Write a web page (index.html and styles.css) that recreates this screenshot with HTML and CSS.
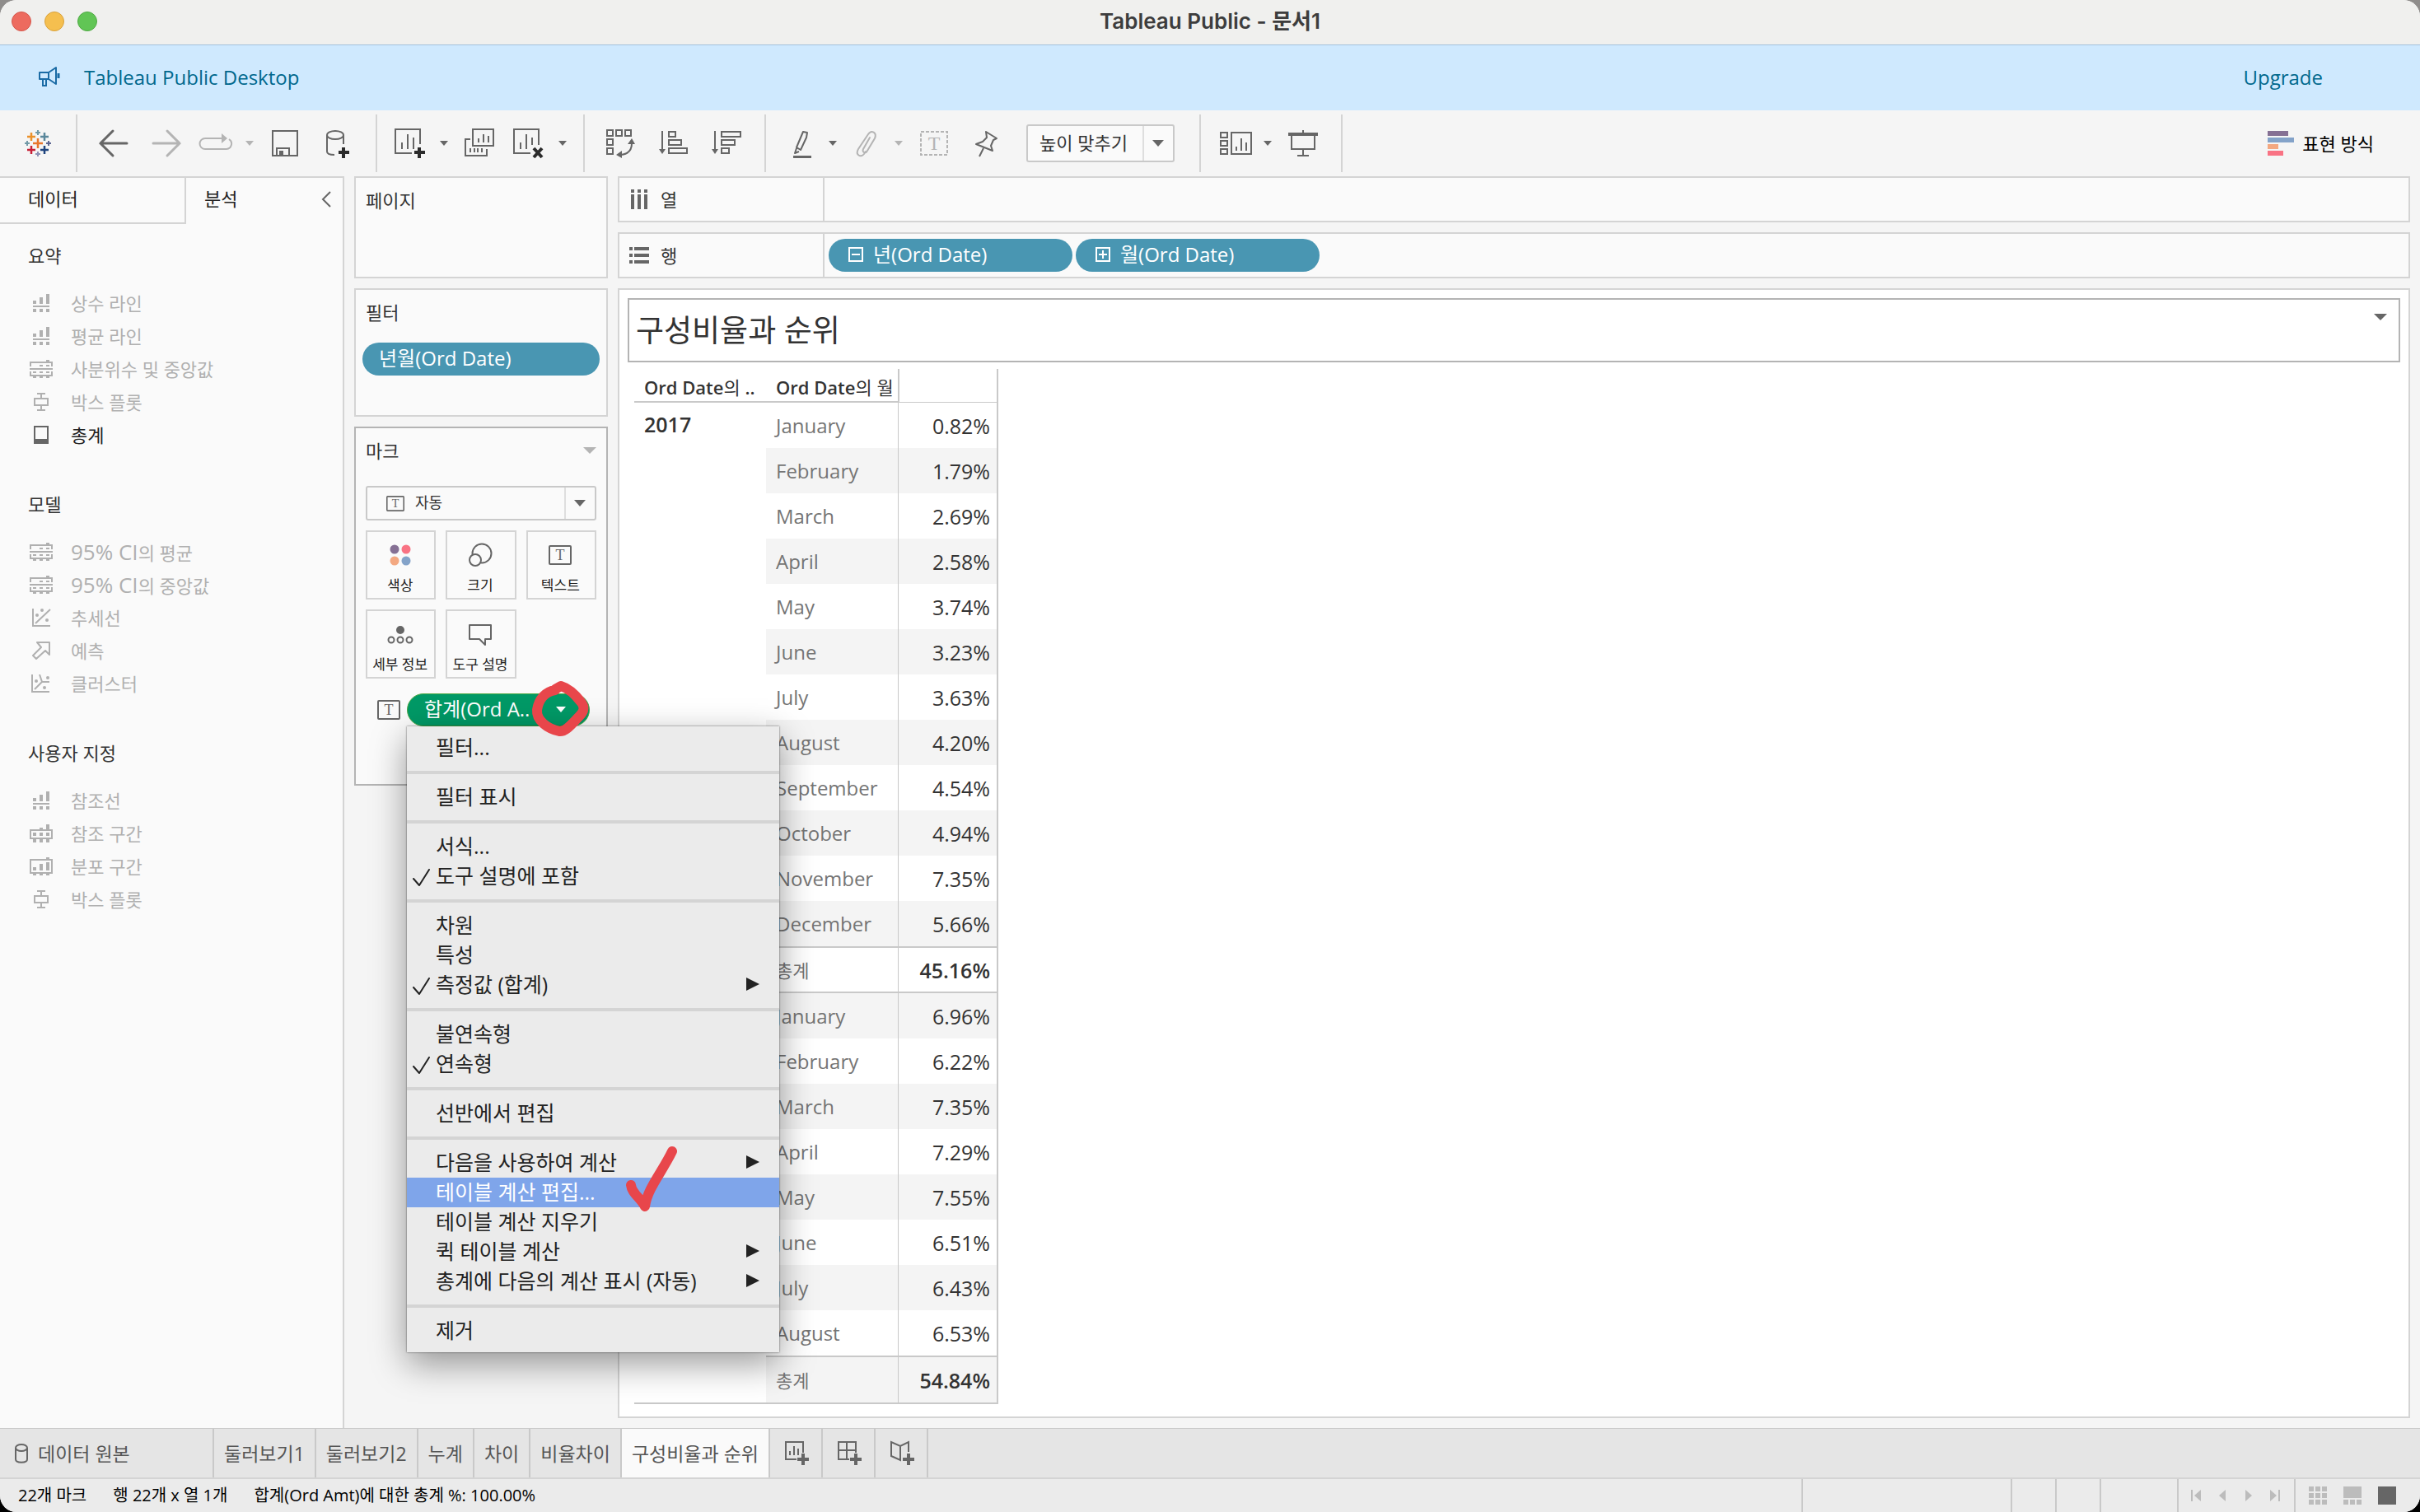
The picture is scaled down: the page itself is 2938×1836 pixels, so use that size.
FILE: index.html
```html
<!DOCTYPE html>
<html lang="ko">
<head>
    <meta charset="UTF-8">
    <meta name="viewport" content="width=device-width, initial-scale=1.0">
    <title>Tableau Public - 문서1</title>
    <link rel="stylesheet" href="styles.css">
</head>
<body>
    <!-- shared icons -->
    <svg class="sprite" aria-hidden="true">
        <symbol id="i-line" viewBox="0 0 28 22">
            <path fill="currentColor" d="M4 8h4v4H4zM12 4h4v8h-4zM20 0h4v12h-4zM4 14h20v2H4zM4 18h4v4H4zM12 18h4v4h-4zM20 18h4v4h-4z"/>
        </symbol>
        <symbol id="i-quartile" viewBox="0 0 28 22">
            <path fill="none" stroke="currentColor" stroke-width="2" d="M1 8V3H27V8M1 14V19H27V14"/>
            <path fill="currentColor" d="M20 0h4v2h-4zM12 6h4v2h-4zM20 6h4v2h-4zM0 10h28v2H0zM4 14h4v2H4zM12 14h4v2h-4zM20 14h4v2h-4zM4 20h4v2H4zM12 20h4v2h-4zM20 20h4v2h-4z"/>
        </symbol>
        <symbol id="i-box" viewBox="0 0 28 22">
            <path fill="none" stroke="currentColor" stroke-width="2" d="M9 1H19M14 1V7M6 7H22V15H6ZM14 15V21M9 21H19"/>
        </symbol>
        <symbol id="i-total" viewBox="0 0 28 22">
            <path fill="none" stroke="currentColor" stroke-width="2" d="M6 1H22V21H6Z"/>
            <path fill="currentColor" d="M6 16h16v5H6z"/>
        </symbol>
        <symbol id="i-trend" viewBox="0 0 28 22">
            <path fill="none" stroke="currentColor" stroke-width="2" d="M4 0V21H25M7 18L25 1"/>
            <g fill="currentColor"><circle cx="9" cy="8" r="2"/><circle cx="15" cy="2" r="2"/><circle cx="21" cy="14" r="2"/></g>
        </symbol>
        <symbol id="i-forecast" viewBox="0 0 28 22">
            <path fill="none" stroke="currentColor" stroke-width="2" stroke-linejoin="round" d="M9 1H24V16L19 11L8 21L4 17L14 7Z"/>
        </symbol>
        <symbol id="i-cluster" viewBox="0 0 28 22">
            <path fill="none" stroke="currentColor" stroke-width="2" d="M3 0V21H24M6 18L15 9L12 0M15 9H24"/>
            <g fill="currentColor"><circle cx="8" cy="8" r="2"/><circle cx="22" cy="4" r="2"/><circle cx="18" cy="16" r="2"/></g>
        </symbol>
        <symbol id="i-band" viewBox="0 0 28 22">
            <path fill="none" stroke="currentColor" stroke-width="2" d="M1 7H27V17H1Z"/>
            <path fill="currentColor" d="M20 0h4v6h-4zM12 4h4v2h-4zM4 10h4v4H4zM12 10h4v4h-4zM20 10h4v4h-4zM4 18h4v4H4zM12 18h4v4h-4zM20 18h4v4h-4z"/>
        </symbol>
        <symbol id="i-dist" viewBox="0 0 28 22">
            <path fill="none" stroke="currentColor" stroke-width="2" d="M1 3H27V19H1Z"/>
            <path fill="currentColor" d="M20 0h4v2h-4zM4 12h4v4H4zM12 8h4v8h-4zM20 6h4v10h-4zM4 20h4v2H4zM12 20h4v2h-4zM20 20h4v2h-4z"/>
        </symbol>
        <symbol id="i-text" viewBox="0 0 28 24">
            <rect x="1" y="1" width="26" height="22" rx="1" fill="none" stroke="currentColor" stroke-width="2"/>
            <text x="14" y="18" text-anchor="middle" font-family="Liberation Serif, serif" font-size="18" fill="currentColor">T</text>
        </symbol>
        <symbol id="i-check" viewBox="0 0 22 22">
            <path fill="none" stroke="currentColor" stroke-width="2" stroke-linecap="round" stroke-linejoin="round" d="M1 12L8 20L20 1"/>
        </symbol>
    </svg>

    <div class="window">
        <header class="titlebar">
            <button class="light red" aria-label="닫기"></button>
            <button class="light yellow" aria-label="최소화"></button>
            <button class="light green" aria-label="확대"></button>
            <h1>Tableau Public - 문서1</h1>
        </header>

        <div class="banner">
            <svg width="26" height="26" viewBox="0 0 26 26" fill="none" stroke="currentColor" stroke-width="2" stroke-linejoin="round"><path d="M1 7H12L21 1V21L12 15H1ZM12 7V15M5 15V24M9 15V24M5 23H9"/><path d="M24 8V14" stroke-width="3"/></svg>
            <a href="#">Tableau Public Desktop</a>
            <a class="upgrade" href="#">Upgrade</a>
        </div>

        <nav class="toolbar">
            <div class="group first">
                <button class="tool" aria-label="시작 페이지">
                    <svg class="icon" viewBox="0 0 36 36" fill="none" stroke-width="2">
                        <path stroke="#e8762c" stroke-width="2.5" d="M18 12V24M12 18H24"/>
                        <path stroke="#eb912b" stroke-width="2.5" d="M10 5V15M5 10H15"/>
                        <path stroke="#59879b" stroke-width="2.5" d="M26 5V15M21 10H31"/>
                        <path stroke="#c72037" stroke-width="2.5" d="M10 21V31M5 26H15"/>
                        <path stroke="#1f447e" stroke-width="2.5" d="M26 21V31M21 26H31"/>
                        <path stroke="#7199a6" d="M18 2V8M15 5H21M5 15V21M2 18H8"/>
                        <path stroke="#8d91b5" d="M18 28V34M15 31H21"/>
                        <path stroke="#5c6692" d="M31 15V21M28 18H34"/>
                    </svg>
                </button>
            </div>
            <div class="group">
                <button class="tool" aria-label="뒤로"><svg class="icon" viewBox="0 0 36 36"><path stroke-width="3" stroke-linecap="round" d="M17 3L2 18L17 33M2 18H34"/></svg></button>
                <button class="tool off" aria-label="앞으로"><svg class="icon" viewBox="0 0 36 36"><path stroke-width="3" stroke-linecap="round" d="M19 3L34 18L19 33M34 18H2"/></svg></button>
                <button class="tool split off" aria-label="다시 실행"><svg class="icon" viewBox="0 0 36 36"><path d="M25 12H5a6.500 6.500 0 0 0 0 13H31a6.500 6.500 0 0 0 3-12"/><path class="solid" d="M25 6L32 12L25 18Z"/></svg><i class="caret"></i></button>
                <button class="tool" aria-label="저장"><svg class="icon" viewBox="0 0 36 36"><path d="M3 3H33V33H3ZM8 33V24H23V33"/><path class="solid" d="M11 27h5v5h-5z"/></svg></button>
                <button class="tool" aria-label="새 데이터 원본"><svg class="icon" viewBox="0 0 36 36"><ellipse cx="15" cy="8" rx="10" ry="5"/><path d="M5 8V28C5 31 9 32 14 32M25 8V19"/><path class="mark" d="M25 23V36M19 29H32"/></svg></button>
            </div>
            <div class="group">
                <button class="tool split" aria-label="새 워크시트"><svg class="icon" viewBox="0 0 36 36"><path d="M20 30H0V1H30V19M8 25V17M15 25V7M22 25V11"/><path class="mark" d="M29 23V36M23 29H36"/></svg><i class="caret"></i></button>
                <button class="tool" aria-label="복제"><svg class="icon" viewBox="0 0 36 36"><path d="M10 1H35V21H10ZM7 13H1V33H27V25M17 17V12M23 17V7M29 17V9M7 29V24M12 29V24M16 29V24M21 29V24"/></svg></button>
                <button class="tool split" aria-label="지우기"><svg class="icon" viewBox="0 0 36 36"><path d="M20 30H0V1H30V20M8 25V17M15 25V7M22 20V11"/><path class="mark" d="M24 24L34 35M34 24L24 35"/></svg><i class="caret"></i></button>
            </div>
            <div class="group">
                <button class="tool" aria-label="행과 열 바꾸기"><svg class="icon" viewBox="0 0 36 36"><path d="M1 2h7v7H1zM12 2h7v7h-7zM23 2h7v7h-7zM1 13h7v7H1zM1 24h7v7H1zM31 18C31 26 27 31 18 32"/><path class="solid" d="M26 19L31 12L35 19ZM12 32L19 27V36Z"/></svg></button>
                <button class="tool" aria-label="오름차순 정렬"><svg class="icon" viewBox="0 0 36 36"><path d="M4 3V27M12 4h8v6h-8zM12 14h15v6H12zM12 24h22v6H12z"/><path class="solid" d="M0 25H8L4 31Z"/></svg></button>
                <button class="tool" aria-label="내림차순 정렬"><svg class="icon" viewBox="0 0 36 36"><path d="M4 3V27M12 4h23v6H12zM12 14h16v6H12zM12 24h9v6h-9z"/><path class="solid" d="M0 25H8L4 31Z"/></svg></button>
            </div>
            <div class="group">
                <button class="tool split" aria-label="하이라이트"><svg class="icon" viewBox="0 0 36 36"><path stroke-linejoin="round" d="M23 4L28 5L27 11L20 26L15 23Z M15 24L13 30L18 28"/><path class="solid" d="M11 33h22v3H11z"/></svg><i class="caret"></i></button>
                <button class="tool split off" aria-label="그룹"><svg class="icon" viewBox="0 0 36 36"><path stroke-linecap="round" d="M24 11L16 25C14 29 19 31 21 27L30 12C33 5 26 1 22 7L10 25C6 32 13 36 17 31L19 28"/></svg><i class="caret"></i></button>
                <button class="tool off" aria-label="레이블"><svg class="icon" viewBox="0 0 36 36"><rect x="2" y="4" width="32" height="28" stroke-dasharray="4 2"/><text x="18" y="26" text-anchor="middle">T</text></svg></button>
                <button class="tool" aria-label="고정"><svg class="icon" viewBox="0 0 36 36"><path stroke-linejoin="round" d="M17 4L30 12L26 14L23 21L25 27L5 19L13 16L18 11ZM14 24L9 34"/></svg></button>
                <div class="dropdown fit">
                    <select aria-label="맞춤"><option>높이 맞추기</option></select>
                    <i class="caret"></i>
                </div>
            </div>
            <div class="group">
                <button class="tool split" aria-label="카드 표시"><svg class="icon" viewBox="0 0 36 36"><path d="M2 5h8v6H2zM2 15h8v6H2zM2 25h8v6H2zM15 5H39V31H15ZM21 27V22M27 27V12M33 27V17"/></svg><i class="caret"></i></button>
                <button class="tool" aria-label="프레젠테이션 모드"><svg class="icon" viewBox="0 0 36 36"><path d="M4 9V25H32V9M18 25V33M11 33H25M18 2V6"/><path class="solid" d="M0 5h36v4H0z"/></svg></button>
            </div>
            <button class="show-me">
                <svg width="32" height="30" viewBox="0 0 32 30"><path fill="#857094" d="M0 0h25v6H0z"/><path fill="#84a3c9" d="M0 8h32v6H0z"/><path fill="#f3a881" d="M0 16h13v6H0z"/><path fill="#f97384" d="M0 24h19v6H0z"/></svg>
                표현 방식
            </button>
        </nav>

        <main class="workspace">
            <aside class="sidebar">
                <div class="side-tabs">
                    <button class="side-tab">데이터</button>
                    <button class="side-tab active">분석</button>
                    <button class="collapse" aria-label="접기"><svg width="12" height="20" viewBox="0 0 12 20"><path fill="none" stroke="#666" stroke-width="2" d="M11 1L2 10L11 19"/></svg></button>
                </div>
                <section class="pane">
                    <h2>요약</h2>
                    <ul>
                        <li><svg><use href="#i-line"/></svg>상수 라인</li>
                        <li><svg><use href="#i-line"/></svg>평균 라인</li>
                        <li><svg><use href="#i-quartile"/></svg>사분위수 및 중앙값</li>
                        <li><svg><use href="#i-box"/></svg>박스 플롯</li>
                        <li class="on"><svg><use href="#i-total"/></svg>총계</li>
                    </ul>
                </section>
                <section class="pane">
                    <h2>모델</h2>
                    <ul>
                        <li><svg><use href="#i-quartile"/></svg><span><span class="latin">95% CI</span>의 평균</span></li>
                        <li><svg><use href="#i-quartile"/></svg><span><span class="latin">95% CI</span>의 중앙값</span></li>
                        <li><svg><use href="#i-trend"/></svg>추세선</li>
                        <li><svg><use href="#i-forecast"/></svg>예측</li>
                        <li><svg><use href="#i-cluster"/></svg>클러스터</li>
                    </ul>
                </section>
                <section class="pane">
                    <h2>사용자 지정</h2>
                    <ul>
                        <li><svg><use href="#i-line"/></svg>참조선</li>
                        <li><svg><use href="#i-band"/></svg>참조 구간</li>
                        <li><svg><use href="#i-dist"/></svg>분포 구간</li>
                        <li><svg><use href="#i-box"/></svg>박스 플롯</li>
                    </ul>
                </section>
            </aside>

            <div class="cards">
                <section class="card pages"><h2>페이지</h2></section>
                <section class="card filters">
                    <h2>필터</h2>
                    <button class="pill">년월(Ord Date)</button>
                </section>
                <section class="card marks">
                    <h2>마크 <i class="caret big"></i></h2>
                    <div class="dropdown mark-type">
                        <svg width="22" height="19" viewBox="0 0 28 24"><use href="#i-text"/></svg>
                        <select aria-label="마크 유형"><option>자동</option></select>
                        <i class="caret"></i>
                    </div>
                    <div class="mark-grid">
                        <button><svg viewBox="0 0 32 32"><circle cx="9" cy="9" r="5.500" fill="#857094"/><circle cx="23" cy="9" r="5.500" fill="#f97384"/><circle cx="9" cy="23" r="5.500" fill="#f3a881"/><circle cx="23" cy="23" r="5.500" fill="#84a3c9"/></svg>색상</button>
                        <button><svg viewBox="0 0 32 32" fill="none" stroke="#666" stroke-width="2"><circle cx="18" cy="14" r="11.500"/><circle cx="10" cy="22" r="7" fill="#fafafa"/></svg>크기</button>
                        <button><svg viewBox="-2 -4 32 32"><use href="#i-text" width="28" height="24"/></svg>텍스트</button>
                        <button><svg viewBox="0 0 32 32" fill="none" stroke="#666" stroke-width="2"><circle cx="16" cy="11" r="4" fill="#666"/><circle cx="5" cy="23" r="3.500"/><circle cx="16" cy="23" r="3.500"/><circle cx="27" cy="23" r="3.500"/></svg>세부 정보</button>
                        <button><svg viewBox="0 0 32 32" fill="none" stroke="#666" stroke-width="2" stroke-linejoin="round"><path d="M3 5H29V22H22V29L15 22H3Z"/></svg>도구 설명</button>
                    </div>
                    <div class="mark-row">
                        <svg width="28" height="24"><use href="#i-text"/></svg>
                        <div class="pill-wrap">
                            <button class="pill green">합계(Ord A..<i class="caret"></i></button>
                            <div class="menu" role="menu">
                                <div class="menu-group"><button>필터...</button></div>
                                <div class="menu-group"><button>필터 표시</button></div>
                                <div class="menu-group">
                                    <button>서식...</button>
                                    <button><svg class="check"><use href="#i-check"/></svg>도구 설명에 포함</button>
                                </div>
                                <div class="menu-group">
                                    <button>차원</button>
                                    <button>특성</button>
                                    <button class="sub"><svg class="check"><use href="#i-check"/></svg>측정값 (합계)</button>
                                </div>
                                <div class="menu-group">
                                    <button>불연속형</button>
                                    <button><svg class="check"><use href="#i-check"/></svg>연속형</button>
                                </div>
                                <div class="menu-group"><button>선반에서 편집</button></div>
                                <div class="menu-group">
                                    <button class="sub">다음을 사용하여 계산</button>
                                    <button class="selected">테이블 계산 편집...</button>
                                    <button>테이블 계산 지우기</button>
                                    <button class="sub">퀵 테이블 계산</button>
                                    <button class="sub">총계에 다음의 계산 표시 (자동)</button>
                                </div>
                                <div class="menu-group"><button>제거</button></div>
                            </div>
                            <!-- red pen marks -->
                            <svg class="pen ring" viewBox="0 0 72 72"><path d="M29 13C17 15 9 24 7 37C6 50 20 60 34 63C42 64 50 53 58 45C65 38 65 33 60 27C53 18 46 11 36 8L29 12"/></svg>
                            <svg class="pen tick" viewBox="0 0 68 82"><path d="M8 48C9 58 20 64 25 74C28 52 46 32 58 7"/></svg>
                        </div>
                    </div>
                </section>
            </div>

            <div class="sheet">
                <div class="shelf">
                    <div class="shelf-label">
                        <svg width="24" height="24" viewBox="0 0 24 24" fill="#666"><path d="M2 0h4v4H2zM10 0h4v4h-4zM18 0h4v4h-4zM2 6h4v18H2zM10 6h4v18h-4zM18 6h4v18h-4z"/></svg>열
                    </div>
                </div>
                <div class="shelf">
                    <div class="shelf-label">
                        <svg width="24" height="24" viewBox="0 0 24 24" fill="#666"><path d="M0 2h4v4H0zM0 10h4v4H0zM0 18h4v4H0zM6 2h18v4H6zM6 10h18v4H6zM6 18h18v4H6z"/></svg>행
                    </div>
                    <div class="shelf-pills">
                        <button class="pill"><svg width="18" height="18" viewBox="0 0 18 18"><path d="M1 1H17V17H1ZM4 9H14"/></svg>년(Ord Date)</button>
                        <button class="pill"><svg width="18" height="18" viewBox="0 0 18 18"><path d="M1 1H17V17H1ZM4 9H14M9 4V14"/></svg>월(Ord Date)</button>
                    </div>
                </div>
                <div class="view">
                    <div class="view-title">
                        <h2>구성비율과 순위</h2>
                        <i class="caret big"></i>
                    </div>
                    <table>
                        <thead>
                            <tr><th>Ord Date<span>의</span> ..</th><th>Ord Date<span>의 월</span></th><th></th></tr>
                        </thead>
                        <tbody>
                            <tr><th class="year" rowspan="13">2017</th><td>January</td><td>0.82%</td></tr>
                            <tr><td>February</td><td>1.79%</td></tr>
                            <tr><td>March</td><td>2.69%</td></tr>
                            <tr><td>April</td><td>2.58%</td></tr>
                            <tr><td>May</td><td>3.74%</td></tr>
                            <tr><td>June</td><td>3.23%</td></tr>
                            <tr><td>July</td><td>3.63%</td></tr>
                            <tr><td>August</td><td>4.20%</td></tr>
                            <tr><td>September</td><td>4.54%</td></tr>
                            <tr><td>October</td><td>4.94%</td></tr>
                            <tr><td>November</td><td>7.35%</td></tr>
                            <tr><td>December</td><td>5.66%</td></tr>
                            <tr class="total"><td>총계</td><td>45.16%</td></tr>
                            <tr><th class="year" rowspan="9"></th><td>January</td><td>6.96%</td></tr>
                            <tr><td>February</td><td>6.22%</td></tr>
                            <tr><td>March</td><td>7.35%</td></tr>
                            <tr><td>April</td><td>7.29%</td></tr>
                            <tr><td>May</td><td>7.55%</td></tr>
                            <tr><td>June</td><td>6.51%</td></tr>
                            <tr><td>July</td><td>6.43%</td></tr>
                            <tr><td>August</td><td>6.53%</td></tr>
                            <tr class="total"><td>총계</td><td>54.84%</td></tr>
                        </tbody>
                    </table>
                </div>
            </div>
        </main>

        <nav class="sheet-tabs">
            <button class="source"><svg width="16" height="24" viewBox="0 0 16 24"><ellipse cx="8" cy="5" rx="7" ry="4"/><path d="M1 5V19C1 24 15 24 15 19V5"/></svg>데이터 원본</button>
            <button>둘러보기1</button>
            <button>둘러보기2</button>
            <button>누계</button>
            <button>차이</button>
            <button>비율차이</button>
            <button class="active">구성비율과 순위</button>
            <button class="new" aria-label="새 워크시트"><svg width="30" height="30" viewBox="0 0 30 30"><path d="M14 22H1V1H22V14M6 17V12M11 17V6M16 17V9"/><path stroke-width="4" d="M22 15V29M15 22H29"/></svg></button>
            <button class="new" aria-label="새 대시보드"><svg width="30" height="30" viewBox="0 0 30 30"><path d="M14 22H1V1H22V14M1 11H22M11 1V22"/><path stroke-width="4" d="M22 15V29M15 22H29"/></svg></button>
            <button class="new" aria-label="새 스토리"><svg width="30" height="30" viewBox="0 0 30 30"><path d="M22 13V1L12 6L1 1V18L12 23V6"/><path stroke-width="4" d="M22 15V29M15 22H29"/></svg></button>
        </nav>

        <footer class="status">
            <span>22개 마크</span>
            <span>행 22개 x 열 1개</span>
            <span class="grow">합계(Ord Amt)에 대한 총계 %: 100.00%</span>
            <div class="cell wide"></div>
            <div class="cell"></div>
            <div class="cell"></div>
            <div class="cell medium"></div>
            <div class="cell nav">
                <button aria-label="처음"><svg width="12" height="14" viewBox="0 0 12 14"><path d="M0 0h2v14H0zM12 0V14L4 7z"/></svg></button>
                <button aria-label="이전"><svg width="12" height="14" viewBox="0 0 12 14"><path d="M10 0V14L2 7z"/></svg></button>
                <button aria-label="다음"><svg width="12" height="14" viewBox="0 0 12 14"><path d="M2 0V14L10 7z"/></svg></button>
                <button aria-label="마지막"><svg width="12" height="14" viewBox="0 0 12 14"><path d="M10 0h2v14h-2zM0 0V14L8 7z"/></svg></button>
            </div>
            <div class="cell modes">
                <button aria-label="시트 정렬"><svg width="22" height="22" viewBox="0 0 22 22"><path d="M0 0h6v6H0zM8 0h6v6H8zM16 0h6v6h-6zM0 8h6v6H0zM8 8h6v6H8zM16 8h6v6h-6zM0 16h6v6H0zM8 16h6v6H8zM16 16h6v6h-6z"/></svg></button>
                <button aria-label="필름 스트립"><svg width="22" height="22" viewBox="0 0 22 22"><path d="M0 0h22v14H0zM0 16h6v6H0zM8 16h6v6H8zM16 16h6v6h-6z"/></svg></button>
                <button class="on" aria-label="탭"><svg width="22" height="22" viewBox="0 0 22 22"><path d="M0 0h22v22H0z"/></svg></button>
            </div>
        </footer>
    </div>
</body>
</html>
```
FILE: styles.css
```css
* {
    box-sizing: border-box;
}
body {
    margin: 0;
    background: linear-gradient(#8f8d8b 50%, #000 50%);
    font-family: "Open Sans", "Noto Sans CJK KR", sans-serif;
    font-size: 22px;
    line-height: 32px;
    color: #333;
}
h1, h2, ul {
    margin: 0;
    padding: 0;
    font-size: 22px;
    font-weight: normal;
    list-style: none;
}
button {
    margin: 0;
    padding: 0;
    border: none;
    background: none;
    font: inherit;
    color: inherit;
    text-align: left;
    white-space: nowrap;
}
svg {
    display: block;
    flex: none;
    overflow: visible;
}
.sprite {
    position: absolute;
    width: 0;
    height: 0;
}
.window {
    display: flex;
    flex-direction: column;
    min-height: 100vh;
    border-radius: 20px;
    overflow: hidden;
    background: #f5f5f5;
}
.caret {
    flex: none;
    border: 5px solid transparent;
    border-top: 6px solid #666;
    border-bottom: none;
}
.caret.big {
    border-width: 8px 8px 0;
}

/* title bar and banner */
.titlebar {
    position: relative;
    display: flex;
    align-items: center;
    gap: 16px;
    height: 54px;
    padding: 0 14px 2px;
    background: #f0f0ee;
}
.titlebar h1 {
    position: absolute;
    left: 0;
    right: 0;
    text-align: center;
    font-family: Inter, "Noto Sans CJK KR", sans-serif;
    font-size: 26px;
    font-weight: 600;
    color: #3d3d3d;
    pointer-events: none;
}
.light {
    width: 24px;
    height: 24px;
    border-radius: 50%;
}
.red { background: #ed6b5f; border: 1px solid #d5574c; }
.yellow { background: #f5bf4f; border: 1px solid #d8a13b; }
.green { background: #61c555; border: 1px solid #50a945; }
.banner {
    display: flex;
    align-items: center;
    height: 80px;
    padding: 0 118px 2px 47px;
    border-top: 1px solid #a3c2dc;
    background: #cfe9fe;
    color: #1a6ba5;
    font-size: 24px;
}
.banner a {
    margin-left: 29px;
    color: #00688d;
    text-decoration: none;
}
.banner .upgrade {
    margin-left: auto;
}

/* toolbar */
.toolbar {
    display: flex;
    align-items: center;
    height: 80px;
}
.group {
    display: flex;
    align-items: center;
    height: 70px;
    padding: 0 14px 0 12px;
    border-right: 2px solid #d4d4d4;
}
.group.first {
    padding: 0 14px;
}
.tool {
    display: flex;
    align-items: center;
    justify-content: center;
    width: 64px;
    height: 64px;
}
.tool.split {
    justify-content: flex-start;
    width: 80px;
    padding-left: 10px;
    gap: 18px;
}
.icon {
    width: 36px;
    height: 36px;
    fill: none;
    stroke: #666;
    stroke-width: 2;
}
.icon .solid {
    fill: #666;
    stroke: none;
}
.icon .mark {
    stroke: #2b2b2b;
    stroke-width: 4;
}
.icon text {
    font-family: "Liberation Serif", serif;
    font-size: 24px;
    fill: #b4b4b4;
    stroke: none;
}
.off .icon {
    stroke: #b4b4b4;
}
.off .solid {
    fill: #b4b4b4;
}
.off .caret {
    border-top-color: #b4b4b4;
}
.dropdown {
    position: relative;
    display: flex;
    align-items: center;
    border: 2px solid #c9c9c9;
    border-radius: 3px;
    background: #fafafa;
}
.dropdown select {
    width: 100%;
    height: 100%;
    padding: 0 0 2px 14px;
    border: none;
    appearance: none;
    background: linear-gradient(#dedede, #dedede) right 35px top / 2px 100% no-repeat;
    font: inherit;
    color: #333;
}
.dropdown .caret {
    position: absolute;
    right: 11px;
    border-width: 8px 7px 0;
}
.fit {
    width: 180px;
    height: 46px;
    margin: 0 16px;
}
.show-me {
    display: flex;
    align-items: center;
    gap: 10px;
    margin: 0 56px 0 auto;
    color: #000;
}

/* workspace */
.workspace {
    flex: 1;
    display: flex;
    gap: 12px;
    padding-right: 12px;
}
.sidebar {
    flex: none;
    width: 418px;
    border: 2px solid #d4d4d4;
    border-width: 2px 2px 0 0;
    background: #fafafa;
}
.side-tabs {
    display: flex;
    height: 56px;
    margin-bottom: 18px;
    color: #222;
}
.side-tab {
    width: 226px;
    padding: 0 0 4px 34px;
    border: 2px solid #d4d4d4;
    border-width: 0 2px 2px 0;
}
.side-tab.active {
    width: auto;
    padding-left: 22px;
    border-color: transparent;
}
.collapse {
    margin: 0 14px 4px auto;
}
.pane {
    padding-left: 34px;
    margin-bottom: 44px;
}
.pane h2 {
    margin-bottom: 18px;
    line-height: 40px;
}
.pane li {
    display: flex;
    align-items: center;
    gap: 22px;
    height: 40px;
    padding-left: 2px;
    color: #b0b0b0;
}
.pane li svg {
    width: 28px;
    height: 22px;
}
.pane .on {
    color: #222;
}
.pane .on svg {
    color: #666;
}
.latin {
    font-size: 26px;
}

/* cards */
.cards {
    flex: none;
    display: flex;
    flex-direction: column;
    gap: 12px;
    width: 308px;
}
.card {
    padding: 7px 8px;
    border: 2px solid #d4d4d4;
    background: #fafafa;
}
.card h2 {
    display: flex;
    align-items: center;
    justify-content: space-between;
    height: 40px;
    padding: 0 4px;
}
.pages {
    height: 124px;
}
.filters {
    height: 156px;
}
.filters .pill {
    width: 100%;
    margin-top: 17px;
}
.pill {
    display: flex;
    align-items: center;
    gap: 12px;
    height: 40px;
    padding: 0 24px 2px 20px;
    border-radius: 20px;
    background: #4996b2;
    color: #fff;
    font-size: 24px;
}
.pill svg {
    fill: none;
    stroke: #fff;
    stroke-width: 2;
}
.green.pill {
    justify-content: space-between;
    width: 222px;
    padding-right: 28px;
    background: #009966;
}
.pill .caret {
    border-width: 7px 6px 0;
    border-top-color: #fff;
}
.marks {
    height: 436px;
    border-color: #b4b4b4;
}
.marks h2 .caret {
    border-top-color: #b4b4b4;
}
.mark-type {
    height: 42px;
    margin: 23px 4px 12px;
    font-size: 18px;
}
.mark-type select {
    padding-left: 58px;
}
.mark-type svg {
    position: absolute;
    left: 23px;
    color: #666;
}
.mark-grid {
    display: grid;
    grid-template-columns: 1fr 1fr 1fr;
    gap: 12px;
    margin: 0 4px 18px;
}
.mark-grid button {
    display: flex;
    flex-direction: column;
    align-items: center;
    height: 84px;
    padding: 12px 2px 0 0;
    border: 2px solid #d4d4d4;
    font-size: 17px;
    line-height: 24px;
    color: #222;
}
.mark-grid svg {
    width: 32px;
    height: 32px;
    margin-bottom: 9px;
    color: #666;
}
.mark-row {
    display: flex;
    align-items: center;
    gap: 8px;
    padding-left: 18px;
    color: #666;
}
.pill-wrap {
    position: relative;
}

/* context menu */
.menu {
    position: absolute;
    z-index: 2;
    top: 100%;
    left: 0;
    width: 452px;
    background: #ebebeb;
    box-shadow: 0 0 2px rgba(0, 0, 0, 0.6), 0 14px 40px rgba(0, 0, 0, 0.4);
    font-size: 25px;
    color: #222;
}
.menu-group {
    padding: 10px 0;
    border-bottom: 4px solid #d4d4d4;
}
.menu-group:first-child {
    padding-top: 8px;
}
.menu-group:last-child {
    padding-bottom: 8px;
    border-bottom: none;
}
.menu button {
    position: relative;
    display: flex;
    align-items: center;
    width: 100%;
    height: 36px;
    padding: 0 24px 2px 35px;
}
.menu .check {
    position: absolute;
    left: 7px;
    top: 9px;
    width: 22px;
    height: 22px;
}
.menu .sub::after {
    content: "";
    margin-left: auto;
    border: 8px solid transparent;
    border-left: 16px solid #222;
    border-right: none;
}
.menu .selected {
    background: #7fa5ea;
    color: #fff;
}
.pen {
    position: absolute;
    z-index: 3;
    fill: none;
    stroke: #e8464b;
    stroke-width: 12;
    stroke-linecap: round;
    stroke-linejoin: round;
    pointer-events: none;
}
.ring {
    left: 151px;
    top: -17px;
    width: 72px;
    height: 72px;
}
.tick {
    left: 264px;
    top: 549px;
    width: 68px;
    height: 82px;
}

/* shelves and view */
.sheet {
    flex: 1;
    display: flex;
    flex-direction: column;
    gap: 12px;
    padding-bottom: 12px;
}
.shelf {
    display: flex;
    height: 56px;
    border: 2px solid #d4d4d4;
    background: #fafafa;
}
.shelf-label {
    display: flex;
    align-items: center;
    gap: 14px;
    width: 249px;
    padding-left: 12px;
    border-right: 2px solid #d4d4d4;
}
.shelf-pills {
    display: flex;
    align-items: center;
    gap: 4px;
    padding-left: 5px;
}
.shelf-pills .pill {
    width: 296px;
    padding-left: 24px;
}
.view {
    flex: 1;
    padding: 10px;
    border: 2px solid #d4d4d4;
    background: #fff;
}
.view-title {
    display: flex;
    justify-content: space-between;
    height: 78px;
    padding: 0 14px 0 8px;
    border: 2px solid #b4b4b4;
}
.view-title h2 {
    font-size: 37px;
    line-height: 74px;
}
.view-title .caret {
    margin-top: 17px;
}
table {
    width: 442px;
    margin: 8px 0 0 8px;
    table-layout: fixed;
    border-collapse: separate;
    border-spacing: 0;
    border-bottom: 2px solid #c9c9c9;
}
th, td {
    padding: 0 0 0 12px;
    text-align: left;
    white-space: nowrap;
}
th {
    width: 160px;
    font-weight: 600;
}
th span {
    font-weight: normal;
}
thead th {
    height: 41px;
    padding-top: 4px;
    border-bottom: 2px solid #c9c9c9;
}
thead th:last-child {
    width: 122px;
    border: 2px solid #c9c9c9;
    border-width: 0 2px 1px;
}
td {
    height: 55px;
    font-size: 24px;
    color: #757575;
}
td:last-child {
    padding: 0 8px 0 0;
    border: 2px solid #c9c9c9;
    border-width: 0 2px 0 1px;
    text-align: right;
    font-size: 25px;
    color: #333;
}
.year {
    padding-top: 10px;
    border-bottom: 2px solid #c9c9c9;
    vertical-align: top;
    font-size: 25px;
}
tbody tr:nth-child(even) td {
    background: #f4f4f4;
}
.total td {
    height: 57px;
    border-top: 2px solid #c9c9c9;
    border-bottom: 2px solid #c9c9c9;
    font-size: 22px;
}
.total td:last-child {
    border-top-width: 2px;
    border-bottom-width: 2px;
    font-size: 25px;
    font-weight: 600;
}
tbody tr:last-child td, .year[rowspan="9"] {
    border-bottom: none;
}

/* bottom bars */
.sheet-tabs {
    display: flex;
    height: 62px;
    border-top: 1px solid #c9c9c9;
    border-bottom: 2px solid #d4d4d4;
    background: #e5e5e5;
    font-size: 23px;
    color: #555;
}
.sheet-tabs button {
    padding: 0 12px;
    border-right: 2px solid #c9c9c9;
}
.sheet-tabs svg {
    fill: none;
    stroke: #666;
    stroke-width: 2;
}
.sheet-tabs .source {
    display: flex;
    align-items: center;
    gap: 12px;
    width: 260px;
    padding-left: 18px;
}
.sheet-tabs .active {
    background: #fafafa;
}
.sheet-tabs .new {
    width: 64px;
    padding-left: 18px;
}
.status {
    display: flex;
    align-items: center;
    gap: 32px;
    height: 40px;
    padding-left: 22px;
    background: #ebebeb;
    font-size: 20px;
    color: #000;
}
.grow {
    flex: 1;
}
.cell {
    display: flex;
    align-items: center;
    height: 100%;
    width: 54px;
    margin-left: -32px;
    border-left: 2px solid #c9c9c9;
}
.cell svg {
    fill: #bcbcbc;
}
.wide {
    width: 254px;
}
.medium {
    width: 94px;
}
.nav {
    width: 142px;
    padding-left: 15px;
    gap: 20px;
}
.modes {
    width: 153px;
    padding-left: 16px;
    gap: 20px;
}
.modes .on svg {
    fill: #666;
}
```
